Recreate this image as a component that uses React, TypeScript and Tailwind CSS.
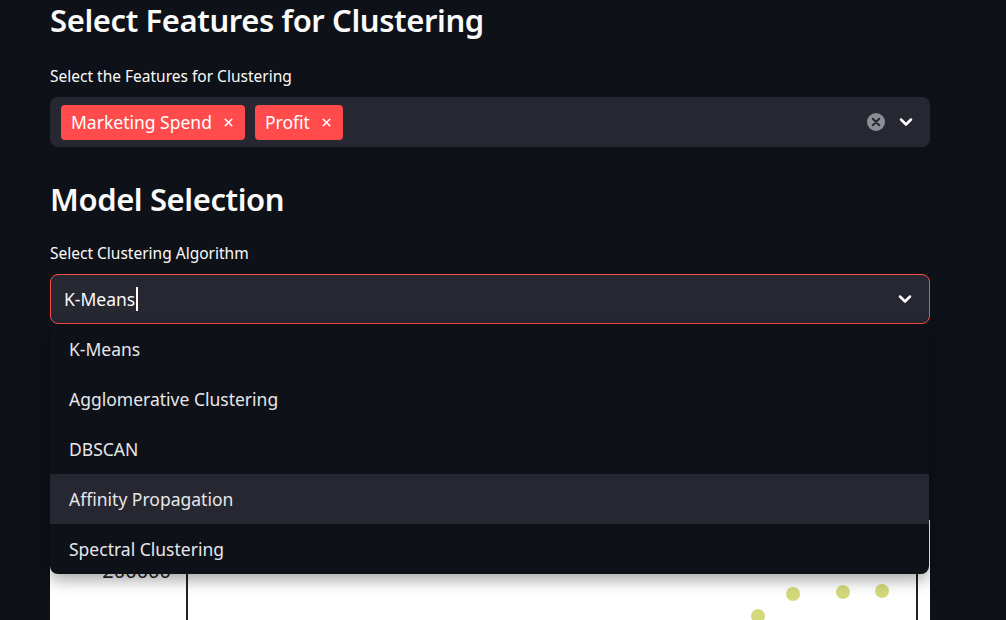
import { ChevronDown, X } from "lucide-react";

const options = [
  "K-Means",
  "Agglomerative Clustering",
  "DBSCAN",
  "Affinity Propagation",
  "Spectral Clustering",
];

function Tag({ label }: { label: string }) {
  return (
    <div className="flex h-[35px] items-center gap-[10px] rounded-[4px] bg-[#ff4b4b] pl-[10px] pr-[10px] text-[17.5px] text-white">
      <span>{label}</span>
      <X size={13} strokeWidth={3} />
    </div>
  );
}

function ClearIcon() {
  return (
    <svg width="20" height="20" viewBox="0 0 20 20">
      <circle cx="10" cy="10" r="9" fill="#8c8e96" />
      <path d="M6.8 6.8 L13.2 13.2 M13.2 6.8 L6.8 13.2" stroke="#262730" strokeWidth="2" strokeLinecap="round" />
    </svg>
  );
}

function Chart() {
  const dots = [
    { x: 708, y: 96 },
    { x: 743, y: 74 },
    { x: 793, y: 72 },
    { x: 832, y: 71 },
  ];
  return (
    <div className="relative h-[100px] w-[880px] bg-white">
      <span className="absolute right-[759px] top-[38px] text-[20px] leading-[26px] text-[#222]">200000</span>
      <div className="absolute left-[136px] top-0 h-full w-[2px] bg-[#222]" />
      <div className="absolute left-[866px] top-0 h-full w-[2px] bg-[#222]" />
      {dots.map((d, i) => (
        <div
          key={i}
          className="absolute h-[14px] w-[14px] rounded-full bg-[#d4da7b]"
          style={{ left: d.x - 7, top: d.y - 7 }}
        />
      ))}
    </div>
  );
}

export default function App() {
  return (
    <div
      className="h-[620px] w-[1006px] overflow-hidden bg-[#0e1117] pl-[50px] text-[#fafafa]"
      style={{ fontFamily: '"Noto Sans", sans-serif' }}
    >
      <div className="w-[880px]">
        <h2 className="-mt-[2px] h-[44px] text-[31px] font-semibold leading-[44px] tracking-[-0.4px]">
          Select Features for Clustering
        </h2>
        <div className="mt-[24px] text-[15.5px] leading-[20px]">Select the Features for Clustering</div>
        <div className="mt-[11px] flex h-[50px] items-center rounded-[8px] bg-[#262730] pl-[11px] pr-[14px]">
          <div className="flex flex-1 gap-[10px]">
            <Tag label="Marketing Spend" />
            <Tag label="Profit" />
          </div>
          <ClearIcon />
          <ChevronDown size={20} strokeWidth={3} className="ml-[10px] text-white" />
        </div>

        <h2 className="mt-[30px] h-[44px] text-[31px] font-semibold leading-[44px] tracking-[-0.4px]">
          Model Selection
        </h2>
        <div className="mt-[22px] text-[15.5px] leading-[20px]">Select Clustering Algorithm</div>
        <div className="relative mt-[11px]">
          <div className="flex h-[50px] items-center rounded-[8px] border border-[#ff4b4b] bg-[#262730] pl-[13px] pr-[14px]">
            <div className="flex flex-1 items-center text-[17.5px]">
              <span>K-Means</span>
              <span className="ml-[1px] h-[24px] w-[2px] bg-white" />
            </div>
            <ChevronDown size={20} strokeWidth={3} className="text-white" />
          </div>
          <div className="absolute left-0 top-[50px] z-10 w-[879px] overflow-hidden rounded-b-[8px] bg-[#0e1118] shadow-[0_6px_16px_rgba(0,0,0,0.35)]">
            {options.map((o) => (
              <div
                key={o}
                className={`flex h-[50px] items-center pl-[19px] text-[17.5px] text-[#e6e6e8] ${
                  o === "Affinity Propagation" ? "bg-[#262730]" : ""
                }`}
              >
                {o}
              </div>
            ))}
          </div>
          <div className="mt-[196px]">
            <Chart />
          </div>
        </div>
      </div>
    </div>
  );
}
